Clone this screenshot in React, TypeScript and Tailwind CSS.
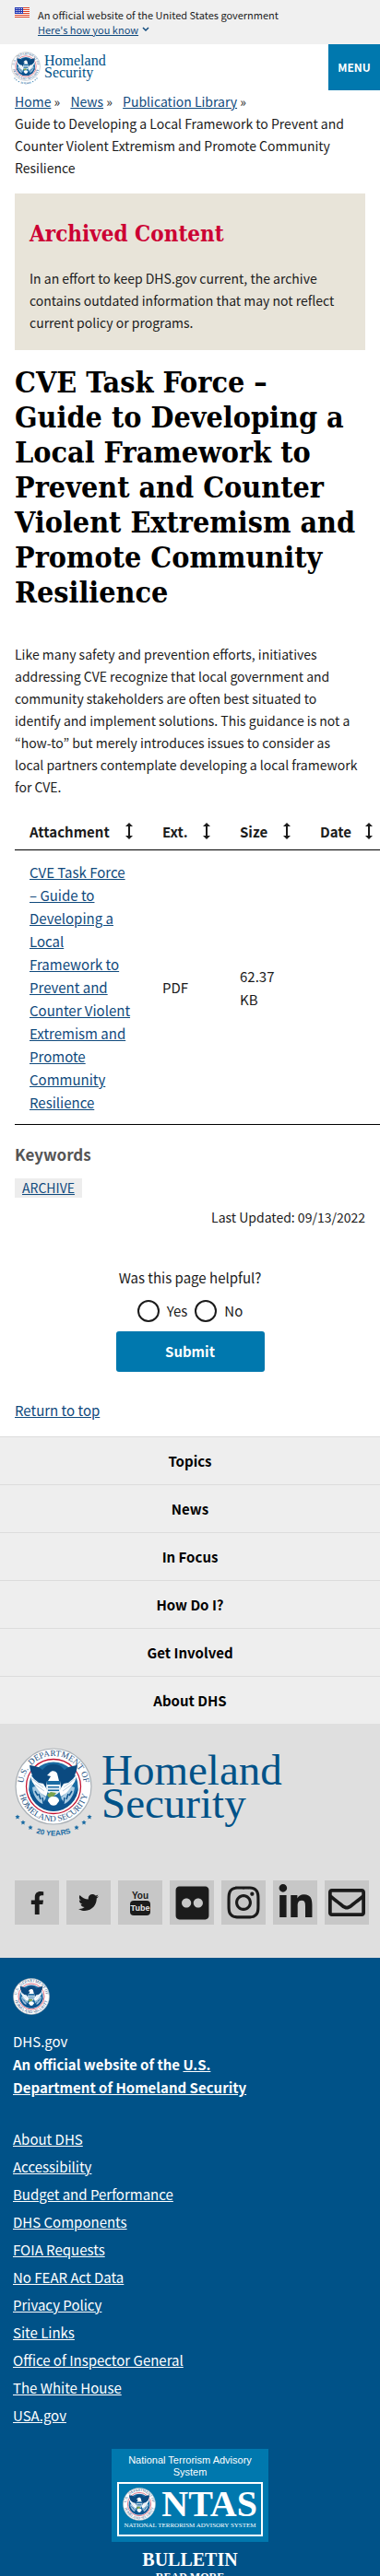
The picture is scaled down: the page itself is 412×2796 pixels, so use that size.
import { useId } from "react";
import type { ReactNode } from "react";
import {
  FaFacebookF,
  FaFlickr,
  FaInstagram,
  FaLinkedinIn,
  FaRegEnvelope,
  FaTwitter,
} from "react-icons/fa";
import { MdHeight } from "react-icons/md";

const SERIF_HEADING = "font-['DejaVu_Serif_Condensed','DejaVu_Serif',serif] font-bold";

function Seal({ className }: { className: string }) {
  const id = useId();
  return (
    <svg viewBox="0 0 84 84" className={className} aria-hidden="true">
      <defs>
        <path id={`${id}-top`} d="M10 50a33 33 0 1 1 64 0" />
        <path id={`${id}-bottom`} d="M4 42a38 38 0 0 0 76 0" />
        <clipPath id={`${id}-disc`}>
          <circle cx="42" cy="42" r="27" />
        </clipPath>
      </defs>
      <circle cx="42" cy="42" r="41" fill="#fff" stroke="#a9b0b6" strokeWidth="1.200" />
      <g fill="#1b4f7f" fontFamily="Liberation Serif, serif" fontSize="9.300">
        <text textAnchor="middle">
          <textPath href={`#${id}-top`} startOffset="50%">
            {"U.S. \u00a0DEPARTMENT OF"}
          </textPath>
        </text>
        <text textAnchor="middle">
          <textPath href={`#${id}-bottom`} startOffset="50%">
            HOMELAND SECURITY
          </textPath>
        </text>
      </g>
      <circle cx="42" cy="42" r="29.500" fill="#fff" stroke="#c41230" strokeWidth="1.300" />
      <circle cx="42" cy="42" r="26.500" fill="#1a6ba3" />
      <g clipPath={`url(#${id}-disc)`}>
        <path d="M15 42c2 8 6 10 12 13l9 3h12l9-3c6-3 10-5 12-13v28H15z" fill="#0d5590" />
        <path
          d="M22 42l12 12-4 7c-7-4-10-10-11-18zM62 42L50 54l4 7c7-4 10-10 11-18z"
          fill="#a9cbe2"
        />
        <path
          d="M22 47l3 5M26 50l2 6M30 54l1 6M62 47l-3 5M58 50l-2 6M54 54l-1 6"
          stroke="#0d5590"
          strokeWidth="1.500"
        />
      </g>
      <path
        d="M16 19c6 1 10 1 14 5l4-4c5-3 11-3 16 0l4 4c4-4 8-4 14-5-1 9-5 16-11 22l-8 6H35l-8-6c-6-6-10-13-11-22z"
        fill="#0b4a80"
      />
      <path d="M16 28l5 6 5 4 5 1 5 8-2 6-6-4-5-6-4-6z" fill="#fff" />
      <path d="M68 28l-5 6-5 4-5 1-5 8 2 6 6-4 5-6 4-6z" fill="#fff" />
      <path
        d="M19 34l12 9M22 40l10 7M65 34l-12 9M62 40l-10 7"
        stroke="#9db9d0"
        strokeWidth=".7"
      />
      <path d="M38 27c2-3 7-2 8 1l2 8H36l3-5-4-1z" fill="#fff" />
      <path d="M35 36h14l1 6c0 5-3 9-8 10-5-1-8-5-8-10z" fill="#e4eff7" />
      <path d="M35 36h14v4H35zM36 42h12v1.500H36zM36 45.500h12V47H36z" fill="#1a6ba3" />
      <path d="M35 51l4-3 6 1-3 4-5 1z" fill="#7aa34d" />
      <path d="M42 53c4 0 6 2 6 5l-3 4c-2 1-4 1-6 0l-3-4c0-3 2-5 6-5z" fill="#fff" />
    </svg>
  );
}

function AnniversaryArc({ className }: { className: string }) {
  const id = useId();
  return (
    <svg viewBox="0 0 84 26" className={className} aria-hidden="true">
      <path id={id} d="M18 18.500Q42 28.500 66 18.500" fill="none" />
      <g fill="#1a6ba3">
        {[
          [3, 3],
          [9, 9],
          [17, 14.5],
          [67, 14.5],
          [75, 9],
          [81, 3],
        ].map(([x, y]) => (
          <path
            key={x}
            transform={`translate(${x} ${y})`}
            d="M0-2.600l.8 1.700 1.800.2-1.300 1.300.3 1.900L0 1.600l-1.600.9.300-1.900-1.300-1.300 1.800-.2z"
          />
        ))}
      </g>
      <text
        fill="#1a6ba3"
        fontFamily="Liberation Sans, sans-serif"
        fontWeight="bold"
        fontSize="8"
        textAnchor="middle"
      >
        <textPath href={`#${id}`} startOffset="50%">
          20 YEARS
        </textPath>
      </text>
    </svg>
  );
}

function Flag() {
  return (
    <svg viewBox="0 0 16 11" className="mt-2 h-[11px] w-4 shrink-0" aria-hidden="true">
      <rect width="16" height="11" fill="#fff" />
      <path
        d="M0 .5h16M0 2.500h16M0 4.500h16M0 6.500h16M0 8.500h16M0 10.500h16"
        stroke="#db3e1f"
        strokeWidth="1"
      />
      <rect width="9" height="7" fill="#1e33b1" />
      <g fill="#fff">
        {[1, 3, 5].map((y) =>
          [1, 3, 5, 7].map((x) => <rect key={`${x}-${y}`} x={x} y={y} width="1" height="1" />),
        )}
      </g>
    </svg>
  );
}

function YouTubeMark() {
  return (
    <svg viewBox="0 0 24 30" className="h-[30px] w-6" aria-hidden="true">
      <g
        fontFamily="Liberation Sans Narrow, Liberation Sans, sans-serif"
        fontWeight="bold"
        textAnchor="middle"
      >
        <text x="12" y="11" fontSize="10" fill="#1b1b1b">
          You
        </text>
        <rect x="1" y="13" width="22" height="16" rx="4" fill="#1b1b1b" />
        <text x="12" y="24" fontSize="9" fill="#e6e6e6">
          Tube
        </text>
      </g>
    </svg>
  );
}

function Wordmark({ className }: { className: string }) {
  return (
    <span className={`font-['Liberation_Serif',serif] text-[#005288] ${className}`}>
      <span className="block">Homeland</span>
      <span className="block">Security</span>
    </span>
  );
}

function TextLink({ children }: { children: ReactNode }) {
  return (
    <a href="#" className="text-[#104a7d] underline">
      {children}
    </a>
  );
}

const columns = [
  { label: "Attachment", width: "w-36" },
  { label: "Ext.", width: "w-[84px]" },
  { label: "Size", width: "w-[87px]" },
  { label: "Date", width: "w-[89px]" },
];

const navItems = ["Topics", "News", "In Focus", "How Do I?", "Get Involved", "About DHS"];

const socialItems = [
  { label: "Facebook", icon: <FaFacebookF className="size-[25px]" /> },
  { label: "Twitter", icon: <FaTwitter className="size-[22px]" /> },
  { label: "YouTube", icon: <YouTubeMark /> },
  { label: "Flickr", icon: <FaFlickr className="size-[41px]" /> },
  { label: "Instagram", icon: <FaInstagram className="size-10" /> },
  { label: "LinkedIn", icon: <FaLinkedinIn className="size-[41px]" /> },
  { label: "Email", icon: <FaRegEnvelope className="size-10" /> },
];

const footerLinks = [
  "About DHS",
  "Accessibility",
  "Budget and Performance",
  "DHS Components",
  "FOIA Requests",
  "No FEAR Act Data",
  "Privacy Policy",
  "Site Links",
  "Office of Inspector General",
  "The White House",
  "USA.gov",
];

export default function App() {
  return (
    <div className="overflow-x-hidden bg-white font-['Noto_Sans_CJK_KR','Open_Sans',sans-serif] text-[15px] leading-6 text-[#1b1b1b]">
      <div className="flex h-12 gap-[9px] bg-[#f0f0f0] px-4">
        <Flag />
        <div className="pt-2 text-[11px] leading-4">
          <p>An official website of the United States government</p>
          <button type="button" className="flex items-center gap-1 text-[#104a7d]">
            <span className="underline">Here's how you know</span>
            <svg viewBox="0 0 8 6" className="h-[6px] w-2" aria-hidden="true">
              <path d="M1 1l3 3 3-3" fill="none" stroke="currentColor" strokeWidth="1.500" />
            </svg>
          </button>
        </div>
      </div>

      <header className="flex justify-between">
        <a href="#" className="flex items-start gap-1 pt-2 pl-3" aria-label="Homeland Security">
          <span className="flex flex-col">
            <Seal className="size-8" />
            <AnniversaryArc className="-mt-1 h-2 w-8" />
          </span>
          <Wordmark className="pt-[3px] text-[16px] leading-[13px]" />
        </a>
        <button type="button" className="h-[50px] w-14 bg-[#0078ae] text-[12px] font-bold text-white">
          MENU
        </button>
      </header>

      <main className="px-4">
        <nav aria-label="Breadcrumb" className="text-[14px]">
          <ol>
            <li className="mr-2 inline">
              <TextLink>Home</TextLink> »
            </li>{" "}
            <li className="mr-2 inline">
              <TextLink>News</TextLink> »
            </li>{" "}
            <li className="inline">
              <TextLink>Publication Library</TextLink> »
            </li>
            <li>
              Guide to Developing a Local Framework to Prevent and Counter Violent Extremism and
              Promote Community Resilience
            </li>
          </ol>
        </nav>

        <section className="mt-4 bg-[#e8e4d9] px-4 pt-7 pb-[18px]">
          <h2 className={`text-[24px] leading-8 text-[#cc0033] ${SERIF_HEADING}`}>
            Archived Content
          </h2>
          <p className="pt-5 text-[14px]">
            In an effort to keep DHS.gov current, the archive contains outdated information that
            may not reflect current policy or programs.
          </p>
        </section>

        <h1 className={`mt-4 pr-1 text-[32px] leading-[38px] text-black ${SERIF_HEADING}`}>
          CVE Task Force – Guide to Developing a Local Framework to Prevent and Counter Violent
          Extremism and Promote Community Resilience
        </h1>

        <p className="mt-9 pr-1 text-[14px]">
          Like many safety and prevention efforts, initiatives addressing CVE recognize that local
          government and community stakeholders are often best situated to identify and implement
          solutions. This guidance is not a “how-to” but merely introduces issues to consider as
          local partners contemplate developing a local framework for CVE.
        </p>

        <div className="-mr-4 mt-4 overflow-hidden">
          <table className="w-[404px] table-fixed border-collapse text-left leading-[25px]">
            <thead>
              <tr className="border-b border-black">
                {columns.map(({ label, width }) => (
                  <th key={label} scope="col" className={`${width} py-1 pr-2 pl-4 font-bold`}>
                    <span className="flex h-8 items-center justify-between">
                      {label}
                      <button type="button" aria-label={`Sort by ${label}`}>
                        <MdHeight className="size-6" />
                      </button>
                    </span>
                  </th>
                ))}
              </tr>
            </thead>
            <tbody>
              <tr className="border-b border-black">
                <td className="px-4 py-[11px]">
                  <TextLink>
                    CVE Task Force – Guide to Developing a Local Framework to Prevent and Counter
                    Violent Extremism and Promote Community Resilience
                  </TextLink>
                </td>
                <td className="px-4">PDF</td>
                <td className="px-4">62.37 KB</td>
                <td className="px-4" />
              </tr>
            </tbody>
          </table>
        </div>

        <h2 className="mt-5 text-[17px] font-bold text-[#555555]">Keywords</h2>
        <p className="mt-3">
          <a
            href="#"
            className="inline-block bg-[#ededed] px-2 text-[14px] leading-[21px] text-[#104a7d] underline"
          >
            ARCHIVE
          </a>
        </p>
        <p className="mt-2 text-right text-[14px]">Last Updated: 09/13/2022</p>

        <form className="mt-[42px] flex flex-col items-center" onSubmit={(e) => e.preventDefault()}>
          <fieldset>
            <legend>Was this page helpful?</legend>
            <div className="mt-3 flex justify-center gap-2">
              {["Yes", "No"].map((answer) => (
                <label key={answer} className="flex items-center gap-2">
                  <input
                    type="radio"
                    name="helpful"
                    className="size-6 appearance-none rounded-full border-2 border-[#1b1b1b] bg-white checked:border-8"
                  />
                  {answer}
                </label>
              ))}
            </div>
          </fieldset>
          <button
            type="submit"
            className="mt-[10px] h-11 w-[161px] rounded-[3px] bg-[#0078ae] font-bold text-white"
          >
            Submit
          </button>
        </form>

        <p className="mt-[30px] pb-4">
          <TextLink>Return to top</TextLink>
        </p>
      </main>

      <footer>
        <nav aria-label="Footer" className="bg-[#eeeeee] text-center font-bold">
          <ul>
            {navItems.map((item) => (
              <li key={item} className="border-t border-[#dcdcdc]">
                <a href="#" className="block py-[14px] leading-[23px] text-black">
                  {item}
                </a>
              </li>
            ))}
          </ul>
        </nav>

        <div className="bg-[#dfdfdf] px-4 pt-[26px] pb-9">
          <a href="#" className="flex items-start gap-[10px]" aria-label="Homeland Security">
            <span className="flex flex-col">
              <Seal className="size-[84px]" />
              <AnniversaryArc className="-mt-3 h-[26px] w-[84px]" />
            </span>
            <Wordmark className="pt-[6px] text-[47px] leading-9" />
          </a>
          <ul className="mt-[46px] flex gap-2">
            {socialItems.map(({ label, icon }) => (
              <li key={label}>
                <a
                  href="#"
                  aria-label={label}
                  className="flex size-12 items-center justify-center bg-[#c7c7c7]"
                >
                  {icon}
                </a>
              </li>
            ))}
          </ul>
        </div>

        <div className="bg-[#005288] px-[14px] pt-[22px] text-white">
          <Seal className="size-10" />
          <div className="mt-4 leading-[25px]">
            <p>DHS.gov</p>
            <p className="max-w-[280px] font-bold">
              An official website of the{" "}
              <a href="#" className="underline">
                U.S. Department of Homeland Security
              </a>
            </p>
          </div>
          <ul className="mt-8 flex flex-col gap-[6px]">
            {footerLinks.map((link) => (
              <li key={link}>
                <a href="#" className="underline">
                  {link}
                </a>
              </li>
            ))}
          </ul>

          <a href="#" className="mx-auto mt-6 block w-[170px] text-center">
            <span className="block bg-[#0078ae] p-[6px]">
              <span className="block font-['Liberation_Sans',sans-serif] text-[11px] leading-[13px]">
                National Terrorism Advisory System
              </span>
              <span className="mt-1 block border-2 border-white p-1">
                <span className="flex items-center justify-between">
                  <Seal className="size-9" />
                  <span className="font-['Liberation_Serif',serif] text-[40px] leading-9 font-bold">
                    NTAS
                  </span>
                </span>
                <span className="block font-['Liberation_Serif',serif] text-[7px] leading-[11px] whitespace-nowrap">
                  NATIONAL TERRORISM ADVISORY SYSTEM
                </span>
              </span>
            </span>
            <span className="mt-2 block font-['Liberation_Serif',serif] font-bold">
              <span className="block text-[20px] leading-[22px]">BULLETIN</span>
              <span className="block text-[12px] leading-4">READ MORE</span>
            </span>
          </a>
        </div>
      </footer>
    </div>
  );
}
